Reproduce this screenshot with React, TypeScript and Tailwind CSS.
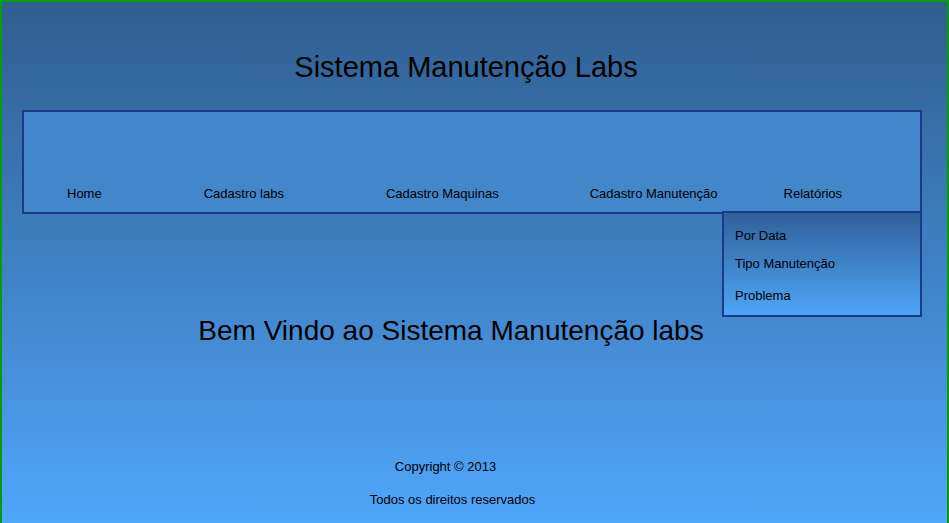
export default function App() {
  const menu = [
    { label: "Home", ml: "ml-[43px]" },
    { label: "Cadastro labs", ml: "ml-[102px]" },
    { label: "Cadastro Maquinas", ml: "ml-[102px]" },
    { label: "Cadastro Manutenção", ml: "ml-[91px]" },
    { label: "Relatórios", ml: "ml-[66px]" },
  ];

  return (
    <div className="w-[949px] h-[530px] overflow-hidden font-['Liberation_Sans',Arial,sans-serif] text-black border-2 border-[#0b9a0b] bg-gradient-to-b from-[#2f5e8f] to-[#50a7fc]">
      {/* Header */}
      <h1 className="pt-[49px] text-center text-[29px] leading-[32px] pr-[17px]">
        Sistema Manutenção Labs
      </h1>

      {/* Menu bar */}
      <div className="relative mt-[27px] ml-[20px] w-[900px] h-[104px] border-2 border-[#1b3a8a] bg-[#4386ca]">
        <ul className="flex items-end h-full pb-[9px] text-[13px]">
          {menu.map((m) => (
            <li key={m.label} className={m.ml}>
              {m.label}
            </li>
          ))}
        </ul>

        {/* Relatórios dropdown */}
        <div className="absolute left-[698px] top-[99px] w-[200px] h-[106px] border-2 border-[#1b3a8a] bg-gradient-to-b from-[#30619a] to-[#4fa6f8] text-[13px] pl-[11px]">
          <div className="pt-[13px]">Por Data</div>
          <div className="pt-[8px]">Tipo Manutenção</div>
          <div className="pt-[13px]">Problema</div>
        </div>
      </div>

      {/* Welcome */}
      <h2 className="mt-[102px] text-center text-[28px] leading-[30px] pr-[47px]">
        Bem Vindo ao Sistema Manutenção labs
      </h2>

      {/* Footer */}
      <div className="mt-[111px] text-center text-[13px] pr-[58px]">
        Copyright © 2013
      </div>
      <div className="mt-[13px] text-center text-[13px] pr-[44px]">
        Todos os direitos reservados
      </div>
    </div>
  );
}
